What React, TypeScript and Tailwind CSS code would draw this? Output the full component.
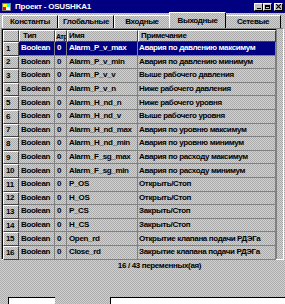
import React from "react";

const DITHER =
  "bg-[image:repeating-conic-gradient(#d0d0d0_0_25%,#acacac_0_50%)] bg-[length:2px_2px]";

const rows: [string, string, string, string][] = [
  ["Boolean", "0", "Alarm_P_v_max", "Авария по давлению максимум"],
  ["Boolean", "0", "Alarm_P_v_min", "Авария по давлению минимум"],
  ["Boolean", "0", "Alarm_P_v_v", "Выше рабочего давления"],
  ["Boolean", "0", "Alarm_P_v_n", "Ниже рабочего давления"],
  ["Boolean", "0", "Alarm_H_nd_n", "Ниже рабочего уровня"],
  ["Boolean", "0", "Alarm_H_nd_v", "Выше рабочего уровня"],
  ["Boolean", "0", "Alarm_H_nd_max", "Авария по уровню максимум"],
  ["Boolean", "0", "Alarm_H_nd_min", "Авария по уровню минимум"],
  ["Boolean", "0", "Alarm_F_sg_max", "Авария по расходу максимум"],
  ["Boolean", "0", "Alarm_F_sg_min", "Авария по расходу минимум"],
  ["Boolean", "0", "P_OS", "Открыть/Стоп"],
  ["Boolean", "0", "H_OS", "Открыть/Стоп"],
  ["Boolean", "0", "P_CS", "Закрыть/Стоп"],
  ["Boolean", "0", "H_CS", "Закрыть/Стоп"],
  ["Boolean", "0", "Open_rd", "Открытие клапана подачи РДЭГа"],
  ["Boolean", "0", "Close_rd", "Закрытие клапана подачи РДЭГа"],
];

const tabs = ["Константы", "Глобальные", "Входные", "Выходные", "Сетевые"];

function TitleButton({ children, className = "" }: { children: React.ReactNode; className?: string }) {
  return (
    <div
      className={
        "w-[9px] h-[8px] bg-[#c0c0c0] border-t border-l border-t-white border-l-white border-b border-r border-b-black border-r-black flex items-center justify-center " +
        className
      }
    >
      {children}
    </div>
  );
}

export default function App() {
  return (
    <div
      className={
        "w-[285px] h-[304px] overflow-hidden flex flex-col text-black font-bold text-[8px] leading-none tracking-[-0.35px] " +
        DITHER
      }
      style={{ fontFamily: '"Liberation Sans", Arial, sans-serif' }}
    >
      {/* Title bar */}
      <div className="h-[13px] bg-[#000080] flex items-center pl-[2px] pr-[2px] shrink-0">
        <svg width="10" height="10" viewBox="0 0 10 10" className="shrink-0">
          <rect x="0" y="1" width="9" height="8" fill="#808080" />
          <rect x="1" y="2" width="4" height="3" fill="#ffff00" />
          <rect x="5" y="2" width="3" height="3" fill="#00ffff" />
          <rect x="1" y="5" width="3" height="3" fill="#ff0000" />
          <rect x="4" y="5" width="4" height="3" fill="#ffffff" />
        </svg>
        <span className="ml-[3px] text-white text-[8px] font-bold tracking-[-0.2px]">Проект - OSUSHKA1</span>
        <div className="ml-auto flex items-center">
          <TitleButton>
            <div className="w-[4px] h-[1px] bg-black mt-[3px]" />
          </TitleButton>
          <TitleButton>
            <div className="w-[5px] h-[4px] border border-black border-t-2" />
          </TitleButton>
          <TitleButton className="ml-[2px]">
            <svg width="5" height="5" viewBox="0 0 5 5">
              <path d="M0 0L5 5M5 0L0 5" stroke="black" strokeWidth="1.2" />
            </svg>
          </TitleButton>
        </div>
      </div>

      {/* Tabs */}
      <div className="h-[15px] flex items-end px-[2px] shrink-0 relative">
        {tabs.map((t, i) => {
          const active = i === 3;
          return (
            <div
              key={t}
              className={
                (active ? "h-[16px] w-[57px] -mx-[1px] z-10 " : "h-[13px] w-[56px] ") +
                "flex items-center justify-center border-t border-l border-t-white border-l-white border-r border-r-black " +
                DITHER
              }
            >
              {t}
            </div>
          );
        })}
      </div>

      {/* Table */}
      <div className="mx-[1px] h-[232px] border-t border-l border-t-[#808080] border-l-[#808080] border-b border-r border-b-white border-r-white shrink-0 flex">
        <div className="flex-1 border-t border-l border-t-black border-l-black flex flex-col">
          <div className="flex h-[12px] shrink-0">
            <div className="w-[16px] border-t border-l border-t-white border-l-white border-r border-b border-r-[#404040] border-b-[#404040]" />
            <div className="w-[36px] flex items-center pl-[3px] border-t border-l border-t-white border-l-white border-r border-b border-r-[#404040] border-b-[#404040]">Тип</div>
            <div className="w-[12px] flex items-center border-t border-l border-t-white border-l-white border-r border-b border-r-[#404040] border-b-[#404040] overflow-hidden whitespace-nowrap text-[7px] tracking-[-0.6px]">Атр</div>
            <div className="w-[71px] flex items-center pl-[1px] border-t border-l border-t-white border-l-white border-r border-b border-r-[#404040] border-b-[#404040]">Имя</div>
            <div className="w-[138px] flex items-center pl-[2px] border-t border-l border-t-white border-l-white border-r border-b border-r-[#404040] border-b-[#404040]">Примечание</div>
          </div>
          {rows.map((r, i) => {
            const sel = i === 0;
            const cell =
              "flex items-center border-r border-b border-r-[#808080] border-b-[#808080] overflow-hidden whitespace-nowrap " +
              (sel ? "bg-[#000080] text-white " : "");
            return (
              <div key={i} className="flex h-[13.6px] shrink-0">
                <div className="w-[16px] flex items-center pl-[2px] border-t border-l border-t-white border-l-white border-r border-b border-r-[#404040] border-b-[#404040]">
                  {i + 1}
                </div>
                <div className={cell + "w-[36px] pl-[2px]"}>{r[0]}</div>
                <div className={cell + "w-[12px] pl-[2px]"}>{r[1]}</div>
                <div className={cell + "w-[71px] pl-[2px]"}>{r[2]}</div>
                <div className={cell + "w-[138px] pl-[1px]"}>{r[3]}</div>
              </div>
            );
          })}
        </div>
        <div className="w-[8px] border-l border-l-[#808080]" />
      </div>

      {/* Status */}
      <div className="h-[12px] flex items-center justify-center pl-[34px] shrink-0">16 / 43 переменных(ая)</div>

      <div className="flex-1" />

      {/* Bottom strip */}
      <div className="h-[8px] flex items-end shrink-0">
        <div className="ml-[8px] w-[47px] h-[7px] bg-white border-t border-l border-t-black border-l-black" />
        <div className="ml-[55px] flex-1 h-[7px] bg-white border-t border-l border-t-black border-l-black" />
      </div>
    </div>
  );
}
